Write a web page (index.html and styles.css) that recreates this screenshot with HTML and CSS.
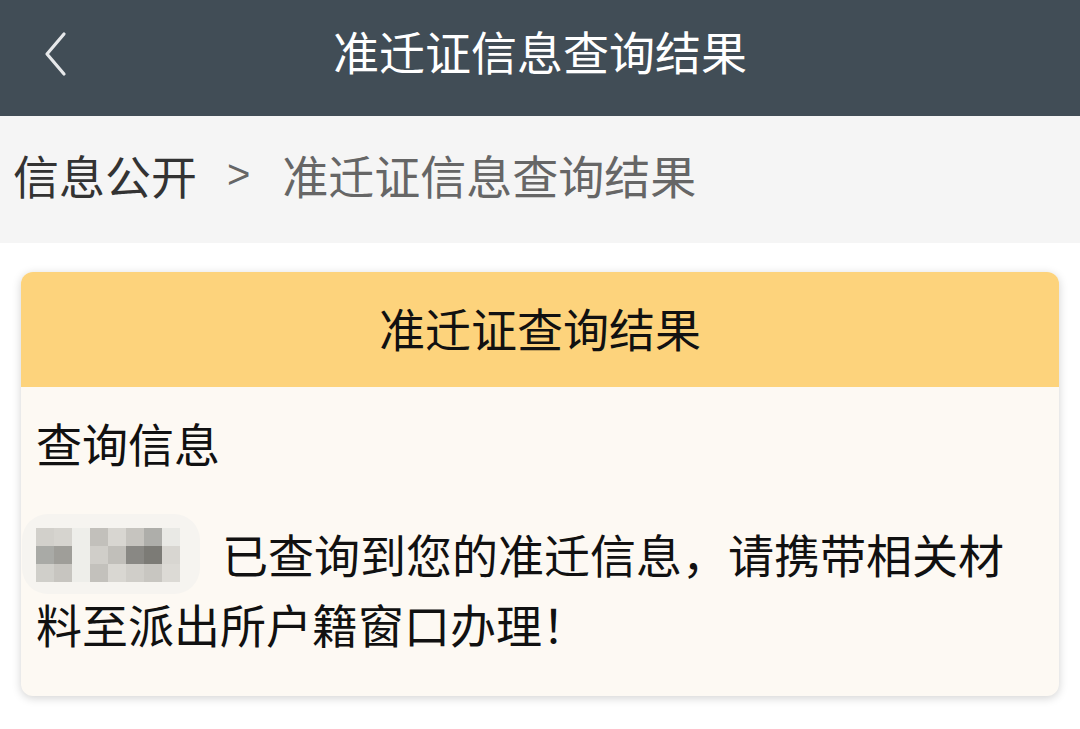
FILE: index.html
```html
<!DOCTYPE html>
<html lang="zh-CN">
<head>
<meta charset="utf-8">
<title>准迁证信息查询结果</title>
<link rel="stylesheet" href="styles.css">
</head>
<body>
<header class="topbar">
  <span class="back">
    <svg width="24" height="46" viewBox="0 0 24 46"><path d="M21 3 L4 23 L21 43" fill="none" stroke="#e6e8ea" stroke-width="3.2" stroke-linecap="round" stroke-linejoin="round"/></svg>
  </span>
  <h1 class="title">准迁证信息查询结果</h1>
</header>
<nav class="crumbs">
  <span class="crumb-home">信息公开</span>
  <span class="crumb-sep">&gt;</span>
  <span class="crumb-cur">准迁证信息查询结果</span>
</nav>
<main class="content">
  <section class="card">
    <div class="card-head">准迁证查询结果</div>
    <div class="card-body">
      <div class="label">查询信息</div>
      <p class="msg"><span class="mosaic"><span class="blob"></span><span class="grid">
        <i class="c1"></i><i class="c2"></i><i class="c3"></i><i class="c4"></i><i class="c5"></i><i class="c6"></i><i class="c7"></i><i class="c8"></i>
        <i class="d1"></i><i class="d2"></i><i class="c3"></i><i class="d4"></i><i class="d5"></i><i class="d6"></i><i class="d7"></i><i class="d8"></i>
        <i class="e1"></i><i class="e2"></i><i class="c3"></i><i class="e4"></i><i class="e5"></i><i class="e6"></i><i class="e7"></i><i class="e8"></i>
      </span></span>已查询到您的准迁信息，请携带相关材料至派出所户籍窗口办理！</p>
    </div>
  </section>
</main>
</body>
</html>
```
FILE: styles.css
```css
* { box-sizing: border-box; }
html, body { margin: 0; padding: 0; background: #ffffff; }
body {
  width: 1080px;
  height: 729px;
  overflow: hidden;
  font-family: "Noto Sans CJK SC", "Noto Sans", sans-serif;
}
.topbar {
  position: relative;
  height: 116px;
  background: #414d56;
  display: flex;
  align-items: center;
  justify-content: center;
  padding-bottom: 16px;
}
.back {
  position: absolute;
  left: 43px;
  top: 31px;
  width: 24px;
  height: 46px;
  display: block;
}
.back svg { display: block; }
.title {
  margin: 0;
  font-size: 46px;
  font-weight: normal;
  color: #ffffff;
  line-height: 60px;
}
.crumbs {
  height: 127px;
  background: #f5f5f5;
  display: flex;
  align-items: center;
  padding-left: 13px;
  padding-bottom: 12px;
  font-size: 46px;
  line-height: 60px;
}
.crumb-home { color: #333333; }
.crumb-sep {
  color: #666666;
  font-family: "Liberation Sans", sans-serif;
  font-size: 40px;
  margin: 0 32px 0 30px;
}
.crumb-cur { color: #666666; }
.content { padding: 29px 21px 0 21px; }
.card {
  border-radius: 12px;
  background: #fdf9f3;
  box-shadow: 0 2px 10px rgba(0, 0, 0, 0.18);
  overflow: hidden;
}
.card-head {
  height: 115px;
  background: #fdd37c;
  display: flex;
  align-items: center;
  justify-content: center;
  font-size: 46px;
  color: #111111;
  line-height: 60px;
  padding-bottom: 6px;
}
.card-body {
  padding: 20px 14px 38px 15px;
  color: #111111;
  font-size: 46px;
}
.label { line-height: 70px; }
.msg {
  margin: 41px 0 0 0;
  line-height: 70px;
}
.mosaic {
  position: relative;
  display: inline-block;
  width: 186px;
  height: 54px;
  vertical-align: -9px;
}
.blob {
  position: absolute;
  left: -14px;
  top: -14px;
  width: 178px;
  height: 80px;
  border-radius: 26px;
  background: #f6f4f0;
}
.grid {
  position: absolute;
  left: 0;
  top: 0;
  display: grid;
  grid-template-columns: repeat(8, 18px);
  grid-template-rows: repeat(3, 18px);
}
.grid i { display: block; }
.c1 { background: #d2d0cb; } .c2 { background: #d6d4cf; } .c3 { background: #eeeeea; } .c4 { background: #c2c0bb; }
.c5 { background: #d8d6d1; } .c6 { background: #c6c4bf; } .c7 { background: #aeaeaa; } .c8 { background: #e9e9e5; }
.d1 { background: #a9aaa6; } .d2 { background: #9f9e99; } .d4 { background: #d0cec9; }
.d5 { background: #c1bfba; } .d6 { background: #898884; } .d7 { background: #7c7b76; } .d8 { background: #d8d6d1; }
.e1 { background: #d0cfca; } .e2 { background: #c7c5c0; } .e4 { background: #c3c1bc; }
.e5 { background: #d9d7d2; } .e6 { background: #d0cec9; } .e7 { background: #c8c6c1; } .e8 { background: #dcdad5; }
```
